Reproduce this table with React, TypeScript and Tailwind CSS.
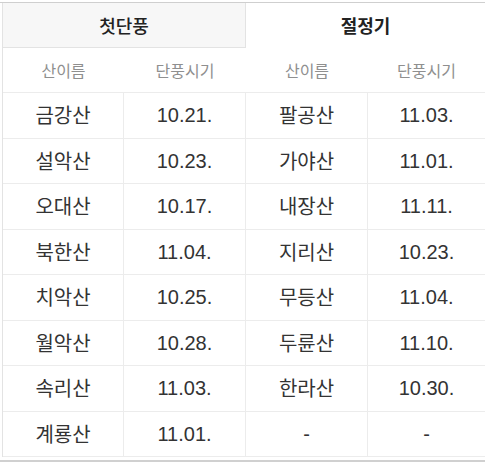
import React from "react";

const left = [
  ["금강산", "10.21."],
  ["설악산", "10.23."],
  ["오대산", "10.17."],
  ["북한산", "11.04."],
  ["치악산", "10.25."],
  ["월악산", "10.28."],
  ["속리산", "11.03."],
  ["계룡산", "11.01."],
];
const right = [
  ["팔공산", "11.03."],
  ["가야산", "11.01."],
  ["내장산", "11.11."],
  ["지리산", "10.23."],
  ["무등산", "11.04."],
  ["두륜산", "11.10."],
  ["한라산", "10.30."],
  ["-", "-"],
];

const ko = { fontFamily: '"Noto Sans CJK KR", "Noto Sans", sans-serif' };
const num = { fontFamily: '"Liberation Sans", Arial, sans-serif' };

export default function App() {
  return (
    <div className="w-[485px] h-[466px] bg-white overflow-hidden" style={ko}>
      <div className="mt-[2px] border-t border-[#cfcfcf]">
        <div className="ml-[2px] border-l border-[#e3e3e3]">
          <div className="flex h-[45px]">
            <div className="w-[243px] flex items-center justify-center bg-[#f7f7f7] border-r border-b border-[#e3e3e3] text-[18px] text-[#222] font-medium">
              첫단풍
            </div>
            <div className="flex-1 flex items-center justify-center text-[18px] text-[#222] font-bold">
              절정기
            </div>
          </div>
          <div className="grid grid-cols-[121px_122px_122px_1fr] h-[45px] border-b border-[#ececec] text-[16px] text-[#8f8f8f]">
            <div className="flex items-center justify-center">산이름</div>
            <div className="flex items-center justify-center">단풍시기</div>
            <div className="flex items-center justify-center">산이름</div>
            <div className="flex items-center justify-center">단풍시기</div>
          </div>
          {left.map((l, i) => (
            <div
              key={i}
              className="grid grid-cols-[121px_122px_122px_1fr] h-[45.5px] border-b border-[#ececec] text-[#333]"
            >
              <div className="flex items-center justify-center border-r border-[#ececec] text-[20px]">
                {l[0]}
              </div>
              <div className="flex items-center justify-center border-r border-[#ececec] text-[20px]" style={num}>
                {l[1]}
              </div>
              <div className="flex items-center justify-center border-r border-[#ececec] text-[20px]" style={right[i][0] === "-" ? num : undefined}>
                {right[i][0]}
              </div>
              <div className="flex items-center justify-center text-[20px]" style={num}>
                {right[i][1]}
              </div>
            </div>
          ))}
        </div>
        <div className="mt-[3px] border-t-2 border-[#d0d0d0]" />
      </div>
    </div>
  );
}
